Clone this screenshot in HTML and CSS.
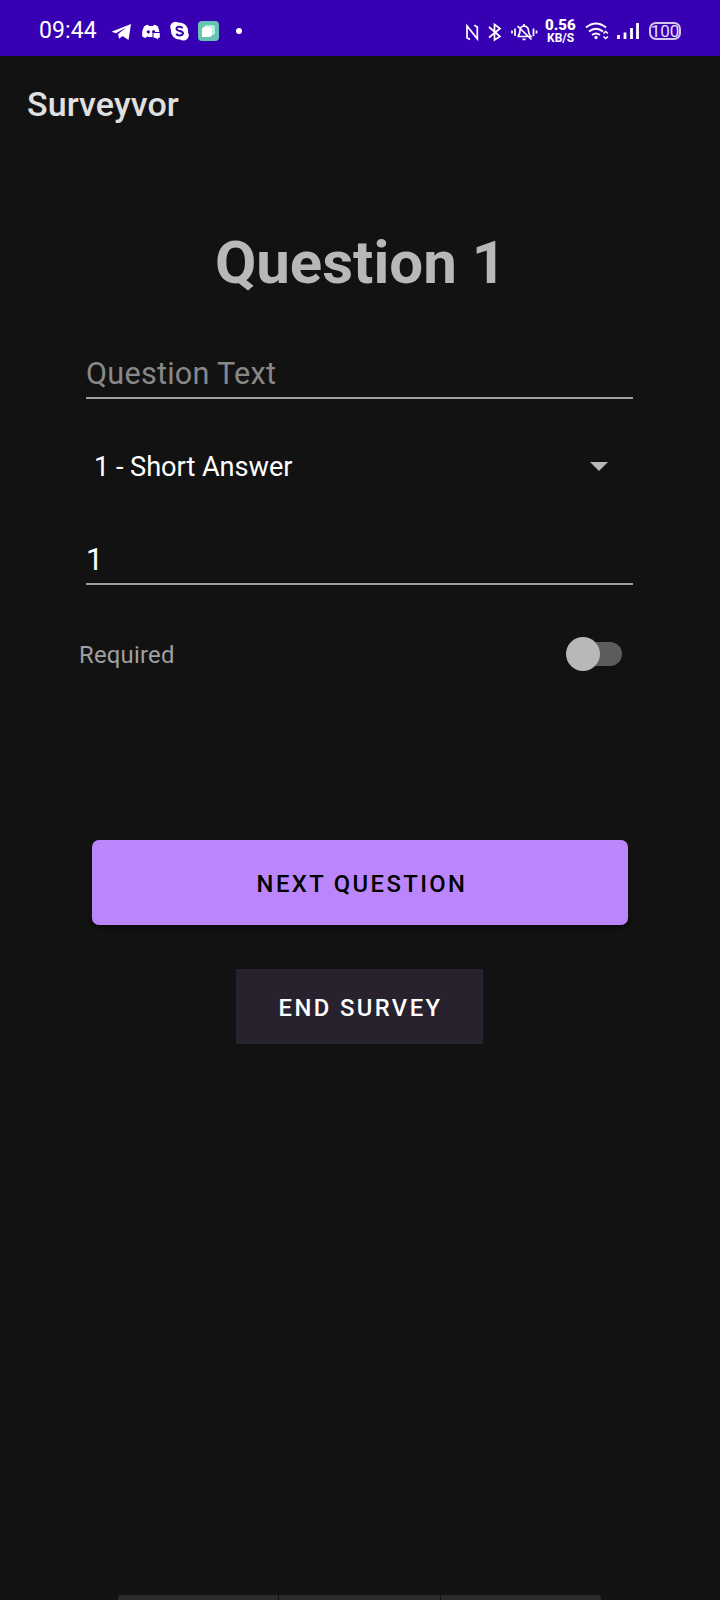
FILE: index.html
```html
<!DOCTYPE html>
<html lang="en">
<head>
<meta charset="utf-8">
<title>Surveyvor</title>
<link rel="stylesheet" href="styles.css">
</head>
<body>
<div class="screen">
  <header class="status">
    <span class="clock">09:44</span>
    <svg class="notifications" width="136" height="56" viewBox="0 0 136 56">
      <path fill="#fff" d="M1.500 31.700 21 24 18.500 40 12.500 36 9 38.800 8.200 34 16 27.500 6 33.300Z"/>
      <path fill="#fff" d="M34 26.500Q36 25 38 24.700L39 26H43L44 24.700Q46 25 48 26.500L49.500 32H42.500V37H39L37 36.500 35.500 38Q33 37.500 32 36Q32 30 34 26.500ZM43.500 33H49.800V37.800H48V39.500L45.500 37.800H43.500Z"/>
      <circle cx="38.300" cy="31.800" r="1.600" fill="#3700b3"/><circle cx="43.600" cy="31.500" r="1.500" fill="#3700b3"/>
      <circle cx="69.500" cy="31" r="8.600" fill="#fff"/><circle cx="65.500" cy="27" r="5.300" fill="#fff"/><circle cx="73.500" cy="35.200" r="5.300" fill="#fff"/>
      <path d="M72.500 28.300C71.500 26 66.500 26.300 66.500 28.800 66.500 31.800 73 30.200 73 33.300 73 36 67.300 36.300 66.300 33.600" fill="none" stroke="#3700b3" stroke-width="1.900"/>
      <rect x="88" y="21" width="21" height="20" rx="4" fill="#66c5b2"/>
      <rect x="94" y="25" width="11" height="10" rx="2.500" fill="#b9eee2"/>
      <path fill="#fff" d="M92 29.500Q92 27 95 27H99.500Q102 27 102 29.500V34Q102 37 99 37H92Z"/>
      <circle cx="129" cy="31" r="3" fill="#fff"/>
    </svg>
    <div class="system">
      <svg width="76" height="56" viewBox="464 0 76 56" fill="none" stroke="#fff" stroke-width="1.700">
        <path d="M470 39.500 467 37.800V26L477.300 38.800V27L474.300 25.200"/>
        <path d="M489 27 500 36.500 494.500 40V24.500L500 28.500 489 37.500"/>
        <path d="M512 30.500V33.500M515 28.500V36M533.500 28.500V36M536.500 30.500V33.500M518 36.500Q520 34 520 30.500 520 26.500 524 26 528.500 26.500 528.500 31 528.500 34 531 36.500H517.500M517.500 26 531.500 39.500M524 24V26M522.500 39.300H525.500"/>
      </svg>
      <div class="speed"><b>0.56</b><span>KB/S</span></div>
      <svg width="58" height="56" viewBox="584 0 58 56" fill="none" stroke="#fff" stroke-width="2">
        <path d="M586 27.500Q596 19.500 606 27.500M589 31.500Q596 26 603 31.500M592 35Q596 32 600 35"/>
        <circle cx="596" cy="37.500" r="1.700" fill="#fff" stroke="none"/>
        <path d="M603.500 33.500 605.700 31.500 608 33.500M603.500 36.500 605.700 38.500 608 36.500" stroke-width="1.500"/>
        <path d="M618.500 35V39M625 32.500V39M631.500 28V39M637.500 23V39" stroke-width="2.800"/>
      </svg>
      <div class="battery">100</div>
    </div>
  </header>
  <div class="appbar">Surveyvor</div>
  <main class="form">
    <h1 class="title">Question 1</h1>
    <div class="field hint">Question Text</div>
    <div class="spinner"><span class="choice">1 - Short Answer</span><i class="arrow"></i></div>
    <div class="field order">1</div>
    <div class="required"><span class="label">Required</span><div class="switch"><i class="thumb"></i></div></div>
    <div class="button next">NEXT QUESTION</div>
    <div class="button end">END SURVEY</div>
  </main>
  <div class="navhint"><i></i><i></i><i></i></div>
</div>
</body>
</html>
```
FILE: styles.css
```css
* { box-sizing: border-box; }
body { margin: 0; background: #121212; font-family: Roboto, sans-serif; color: #fff; }
.screen { width: 720px; height: 1600px; display: flex; flex-direction: column; overflow: hidden; }
.status { height: 56px; background: #3700b3; display: flex; align-items: flex-start; padding-left: 39px; }
.clock { width: 71px; font-size: 23px; line-height: 62px; letter-spacing: .1px; white-space: nowrap; }
.system { display: flex; margin-left: auto; padding-right: 39px; }
.speed { width: 44px; padding: 18px 0 0 5px; display: flex; flex-direction: column; font-weight: 700; }
.speed b { font-size: 15px; line-height: 15px; }
.speed span { font-size: 12px; line-height: 10px; padding-left: 2px; }
.battery { width: 32px; height: 18px; margin: 22px 0 0 7px; border: 2px solid #d3c6f0; border-radius: 7px; font-size: 17px; line-height: 14px; display: flex; justify-content: center; color: #e8dffa; }
.appbar { height: 96px; line-height: 97px; padding-left: 27px; font-size: 34px; font-weight: 500; letter-spacing: .1px; color: #e0e0e0; }
.form { display: flex; flex-direction: column; padding: 75px 87px 0 86px; }
.title { margin: 0 0 55px; padding-left: 2px; font-size: 60px; line-height: 71px; font-weight: 700; color: #b8b8b8; text-align: center; }
.field { height: 46px; border-bottom: 2px solid #a09ea0; font-size: 30.6px; line-height: 41px; }
.hint { color: #888; letter-spacing: .25px; }
.spinner { margin: 47px 25px 52px 8px; height: 41px; font-size: 27.2px; letter-spacing: -.05px; display: flex; justify-content: space-between; align-items: center; }
.choice { line-height: 39px; padding-top: 2px; }
.arrow { border: solid transparent; border-width: 9px 9px 0; border-top-color: #b8b8b8; }
.required { margin: 52px 11px 0 -7px; height: 34px; display: flex; justify-content: space-between; align-items: center; }
.label { font-size: 23.8px; line-height: 34px; letter-spacing: .25px; padding-top: 1px; color: #a0a0a0; }
.switch { width: 51px; height: 24px; border-radius: 12px; background: #5c5c5c; display: flex; align-items: center; }
.thumb { width: 34px; height: 34px; margin-left: -5px; border-radius: 50%; background: #b8b8b8; flex: none; }
.button { display: flex; justify-content: center; align-items: center; font-size: 23.8px; font-weight: 500; letter-spacing: 2.4px; padding-top: 3px; }
.next { margin: 169px 5px 0 6px; padding-left: 4px; height: 85px; border-radius: 7px; background: #bb86fc; color: #000; box-shadow: 0 3px 4px rgba(0,0,0,.4); }
.end { align-self: center; width: 247px; height: 75px; margin-top: 44px; padding-left: 2px; background: #28222f; }
.navhint { margin: auto 119px 0 118px; height: 5px; display: flex; gap: 1px; border-radius: 3px 3px 0 0; overflow: hidden; }
.navhint i { flex: 1; background: #2b2b2b; }
```
